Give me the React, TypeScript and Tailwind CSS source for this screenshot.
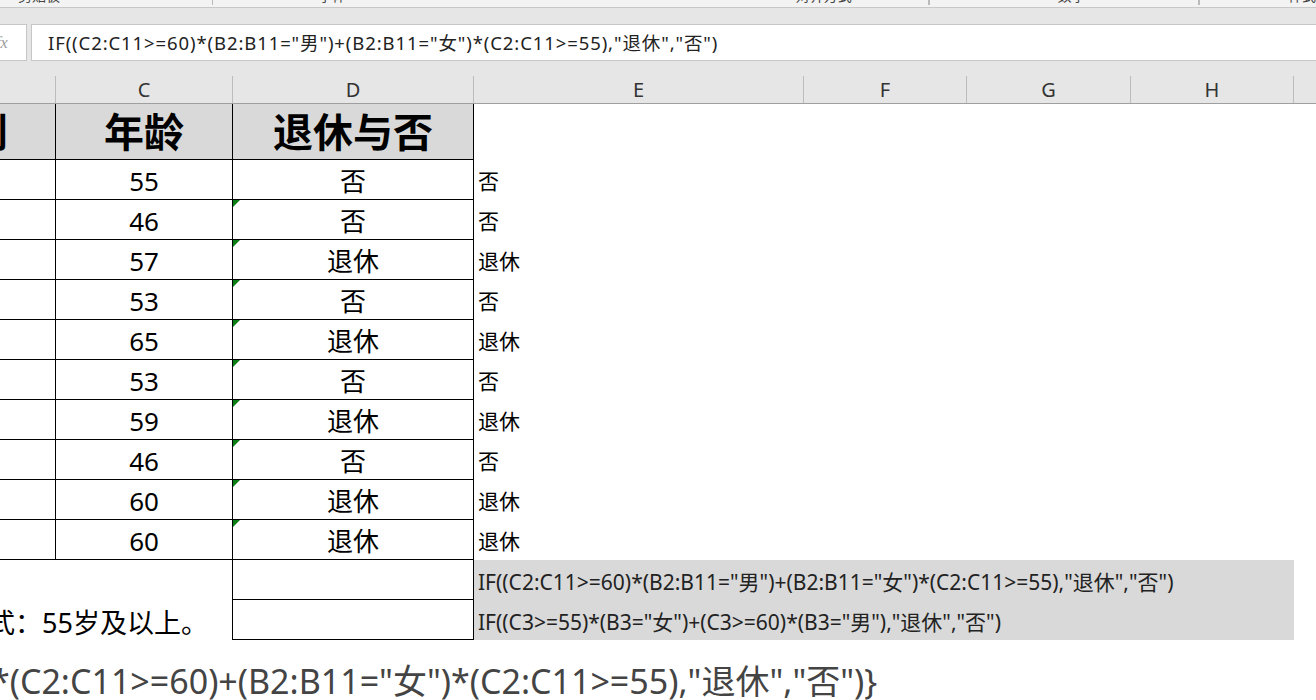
const rows: [number, string][] = [
  [55, "否"],
  [46, "否"],
  [57, "退休"],
  [53, "否"],
  [65, "退休"],
  [53, "否"],
  [59, "退休"],
  [46, "否"],
  [60, "退休"],
  [60, "退休"],
];

const cols = [
  { label: "", w: "w-[56px]" },
  { label: "C", w: "w-[177px]" },
  { label: "D", w: "w-[241px]" },
  { label: "E", w: "w-[330px]" },
  { label: "F", w: "w-[163px]" },
  { label: "G", w: "w-[164px]" },
  { label: "H", w: "w-[163px]" },
];

function GreenMark() {
  return (
    <span className="absolute left-0 top-0 h-0 w-0 border-t-[7px] border-r-[7px] border-t-[#0a7d16] border-r-transparent" />
  );
}

export default function App() {
  return (
    <div className="w-[1316px] h-[700px] overflow-hidden bg-white text-black font-['Noto_Sans','Noto_Sans_CJK_SC',sans-serif]">
      {/* ribbon group labels, cut off at the top */}
      <div className="h-[8px] overflow-hidden bg-[#f3f3f3] border-b border-[#c8c8c8]">
        <div className="flex -mt-[13px] text-[14px] leading-[18px] text-[#444] whitespace-nowrap">
          <span className="ml-[18px] w-[220px]">剪贴板</span>
          <span className="w-[2px] h-[18px] bg-[#bbb]" />
          <span className="ml-[105px] w-[270px]">字体</span>
          <span className="ml-[240px] w-[150px]">对齐方式</span>
          <span className="w-[2px] h-[18px] bg-[#bbb]" />
          <span className="ml-[128px] w-[160px]">数字</span>
          <span className="w-[2px] h-[18px] bg-[#bbb]" />
          <span className="ml-[88px]">样式</span>
        </div>
      </div>

      {/* formula bar */}
      <div className="h-[68px] bg-[#e6e6e6] pt-[16px]">
        <div className="flex h-[37px] gap-[4px]">
          <div className="w-[27px] bg-white border-y border-r border-[#c6c6c6] flex items-center">
            <span className="-ml-[4px] text-[16px] italic text-[#999] font-['Liberation_Serif',serif]">fx</span>
          </div>
          <div className="flex-1 bg-white border-y border-l border-[#c6c6c6] pl-[16px] flex items-center text-[18.5px] tracking-[0.9px] text-[#222] whitespace-nowrap">
            IF((C2:C11&gt;=60)*(B2:B11="男")+(B2:B11="女")*(C2:C11&gt;=55),"退休","否")
          </div>
        </div>
      </div>

      {/* column headers */}
      <div className="flex h-[28px] bg-[#e6e6e6] border-b border-[#9f9f9f]">
        {cols.map((c, i) => (
          <div
            key={i}
            className={`${c.w} shrink-0 border-r border-[#bcbcbc] flex items-center justify-center text-[20px] text-[#333]`}
          >
            {c.label}
          </div>
        ))}
        <div className="flex-1" />
      </div>

      {/* table header */}
      <div className="flex h-[56px]">
        <div className="w-[56px] shrink-0 overflow-hidden border-r border-b border-black bg-[#d9d9d9] flex items-center justify-end">
          <span className="shrink-0 mr-[47px] text-[40px] font-bold leading-none">性别</span>
        </div>
        <div className="w-[177px] shrink-0 border-r border-b border-black bg-[#d9d9d9] flex items-center justify-center text-[40px] font-bold leading-none">
          年龄
        </div>
        <div className="w-[241px] shrink-0 border-r border-b border-black bg-[#d9d9d9] flex items-center justify-center text-[40px] font-bold leading-none">
          退休与否
        </div>
        <div className="flex-1" />
      </div>

      {rows.map(([age, res], i) => (
        <div key={i} className="flex h-[40px]">
          <div className="w-[56px] shrink-0 border-r border-b border-black" />
          <div className="w-[177px] shrink-0 border-r border-b border-black flex items-center justify-center text-[26px] leading-none pt-[3px]">
            {age}
          </div>
          <div className="relative w-[241px] shrink-0 border-r border-b border-black flex items-center justify-center text-[26px] leading-none pt-[3px]">
            {i > 0 && <GreenMark />}
            {res}
          </div>
          <div className="flex-1 flex items-center pl-[4px] pt-[3px] text-[21px] leading-none">{res}</div>
        </div>
      ))}

      {/* extra rows */}
      <div className="flex h-[40px]">
        <div className="w-[233px] shrink-0 border-r border-black" />
        <div className="w-[241px] shrink-0 border-r border-b border-black" />
        <div className="w-[820px] shrink-0 bg-[#d9d9d9] flex items-center pl-[4px] pt-[4px] overflow-hidden whitespace-nowrap">
          <span className="text-[21px] text-[#222] leading-none">
            IF((C2:C11&gt;=60)*(B2:B11="男")+(B2:B11="女")*(C2:C11&gt;=55),"退休","否")
          </span>
        </div>
      </div>
      <div className="flex h-[40px]">
        <div className="w-[233px] shrink-0 border-r border-black overflow-hidden flex items-center justify-end pr-[24px] pt-[4px] whitespace-nowrap">
          <span className="shrink-0 text-[27px] leading-none">退休方式：55岁及以上。</span>
        </div>
        <div className="w-[241px] shrink-0 border-r border-b border-black" />
        <div className="w-[820px] shrink-0 bg-[#d9d9d9] flex items-center pl-[4px] pt-[4px] overflow-hidden whitespace-nowrap">
          <span className="text-[21px] text-[#222] leading-none">
            IF((C3&gt;=55)*(B3="女")+(C3&gt;=60)*(B3="男"),"退休","否")
          </span>
        </div>
      </div>

      {/* pasted formula below */}
      <div className="h-[60px] overflow-hidden pt-[24px] -ml-[9px] whitespace-nowrap">
        <span className="inline-block text-[34px] leading-none text-[#444]">
          *(C2:C11&gt;=60)+(B2:B11="女")*(C2:C11&gt;=55),"退休","否")&#125;
        </span>
      </div>
    </div>
  );
}
